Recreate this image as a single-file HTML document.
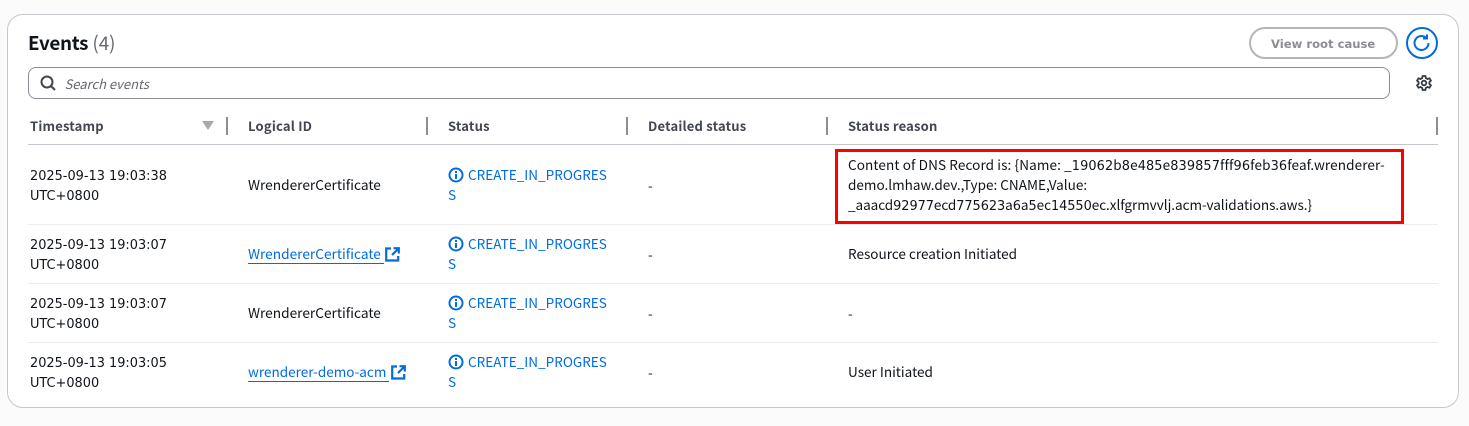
<!DOCTYPE html>
<html><head><meta charset="utf-8"><style>
html,body{margin:0;padding:0;background:#fbfbfb;}
#r{position:relative;width:1469px;height:426px;overflow:hidden;background:#fbfbfb;font-family:"Noto Sans CJK JP","Liberation Sans",sans-serif;font-size:13.55px;color:#0f141a;}
#r div,#r svg{position:absolute;}
.card{left:7px;top:14px;width:1450px;height:392px;background:#fff;border:1px solid #c6c6cd;border-radius:16px;}
.t{white-space:nowrap;line-height:20px;}
.ts{font-family:"DejaVu Sans",sans-serif;font-size:12.9px;}
.h{font-weight:700;color:#424650;top:116px;font-size:13px;letter-spacing:.2px;}
.hl{height:1px;left:28px;width:1410px;background:#ebebf0;}
.d{width:2px;height:18px;top:117px;background:#8c8c94;}
.st{color:#006ce0;}
.w{font-size:13.7px;}
.lk{color:#006ce0;border-bottom:1px solid #006ce0;line-height:19px;padding-right:3px;}
i.n{font-style:normal;font-family:"DejaVu Sans",sans-serif;font-size:12.9px;line-height:0;}
</style></head><body><div id="r">
<div class="card"></div>
<div class="t" style="left:28px;top:29px;font-size:18.8px;line-height:28px;font-weight:700"><span style="letter-spacing:-.3px">Events</span> <span style="font-weight:400;color:#656871">(4)</span></div>
<div style="left:1249px;top:27px;width:145px;height:28px;border:2px solid #b4b4bb;border-radius:16px"></div>
<div class="t ts" style="left:1271px;top:34px;font-weight:700;color:#8c8c94;font-size:11.6px">View root cause</div>
<div style="left:1406px;top:27px;width:28px;height:28px;border:2px solid #006ce0;border-radius:50%"></div>
<svg style="left:1412px;top:33px" width="20" height="20" viewBox="0 0 20 20" fill="none" stroke="#006ce0" stroke-width="2"><path d="M16.5 10a7 7 0 1 1-2.4-5.3"/><path d="M15 1.5v4h-4"/></svg>
<div style="left:28px;top:67px;width:1360px;height:30px;border:1px solid #8c8c94;border-radius:8px;background:#fff"></div>
<svg style="left:40px;top:75px" width="16" height="16" viewBox="0 0 16 16" fill="none" stroke="#424650" stroke-width="2"><circle cx="7" cy="7" r="5.5"/><path d="M11 11l4 4"/></svg>
<div class="t" style="left:64.5px;top:74px;font-style:italic;color:#656871;font-size:13px">Search events</div>
<svg style="left:1416px;top:75px" width="16" height="16" viewBox="0 0 16 16" fill="none" stroke="#353a44" stroke-width="1.8"><circle cx="8" cy="8" r="2.3"/><path d="M6.6 1h2.8l.4 2 1.7 1 2-.7 1.4 2.4-1.5 1.4v1.8l1.5 1.4-1.4 2.4-2-.7-1.7 1-.4 2H6.6l-.4-2-1.7-1-2 .7-1.4-2.4 1.5-1.4V7.1L1.1 5.7l1.4-2.4 2 .7 1.7-1z"/></svg>
<div class="t h" style="left:30px">Timestamp</div>
<svg style="left:202px;top:121px" width="12" height="10"><path d="M0 0h12L6 9z" fill="#a8a8b0"/></svg>
<div class="d" style="left:226px"></div>
<div class="t h" style="left:248px">Logical ID</div>
<div class="d" style="left:426px"></div>
<div class="t h" style="left:448px">Status</div>
<div class="d" style="left:626px"></div>
<div class="t h" style="left:648px">Detailed status</div>
<div class="d" style="left:826px"></div>
<div class="t h" style="left:848px">Status reason</div>
<div class="d" style="left:1436px"></div>
<div class="hl" style="top:144px;background:#c6c6cd"></div>
<div class="hl" style="top:224px"></div>
<div class="hl" style="top:283px"></div>
<div class="hl" style="top:342px"></div>

<div class="t ts" style="left:30px;top:167px">2025-09-13 19:03:38<br>UTC+0800</div>
<div class="t w" style="left:248px;top:174px">WrendererCertificate</div>
<svg style="left:448px;top:167px" width="16" height="16" viewBox="0 0 16 16" fill="none" stroke="#006ce0" stroke-width="2"><circle cx="8" cy="8" r="6.5"/><path d="M8 7v5M8 4v2"/></svg>
<div class="t st" style="left:468px;top:164px">CREATE_IN_PROGRES</div><div class="t st" style="left:448px;top:184px">S</div>
<div class="t" style="left:648px;top:175px">-</div>
<div class="t" style="left:848px;top:154px"><span style="letter-spacing:.1px">Content of DNS Record is: {Name: _<i class="n">19062</i>b<i class="n">8</i>e<i class="n">485</i>e<i class="n">839857</i>fff<i class="n">96</i>feb<i class="n">36</i>feaf.wrenderer-</span><br>demo.lmhaw.dev.,Type: CNAME,Value:<br><span style="letter-spacing:-.05px">_aaacd<i class="n">92977</i>ecd<i class="n">775623</i>a<i class="n">6</i>a<i class="n">5</i>ec<i class="n">14550</i>ec.xlfgrmvvlj.acm-validations.aws.}</span></div>
<div style="left:835px;top:149px;width:563px;height:69px;border:3px solid #f00"></div>

<div class="t ts" style="left:30px;top:236px">2025-09-13 19:03:07<br>UTC+0800</div>
<div class="t lk w" style="left:248px;top:244px">WrendererCertificate</div>
<svg style="left:385px;top:247px" width="15" height="15" viewBox="0 0 15 15" fill="none" stroke="#006ce0" stroke-width="2.2"><path d="M6 1.5H1.2v12h12V9"/><path d="M8.5 1.2h5.3v5.3M13.5 1.5L7 8" /></svg>
<svg style="left:448px;top:236px" width="16" height="16" viewBox="0 0 16 16" fill="none" stroke="#006ce0" stroke-width="2"><circle cx="8" cy="8" r="6.5"/><path d="M8 7v5M8 4v2"/></svg>
<div class="t st" style="left:468px;top:233px">CREATE_IN_PROGRES</div><div class="t st" style="left:448px;top:253px">S</div>
<div class="t" style="left:648px;top:244px">-</div>
<div class="t" style="left:848px;top:243px">Resource creation Initiated</div>

<div class="t ts" style="left:30px;top:295px">2025-09-13 19:03:07<br>UTC+0800</div>
<div class="t w" style="left:248px;top:302px">WrendererCertificate</div>
<svg style="left:448px;top:295px" width="16" height="16" viewBox="0 0 16 16" fill="none" stroke="#006ce0" stroke-width="2"><circle cx="8" cy="8" r="6.5"/><path d="M8 7v5M8 4v2"/></svg>
<div class="t st" style="left:468px;top:292px">CREATE_IN_PROGRES</div><div class="t st" style="left:448px;top:312px">S</div>
<div class="t" style="left:648px;top:303px">-</div>
<div class="t" style="left:848px;top:303px">-</div>

<div class="t ts" style="left:30px;top:354px">2025-09-13 19:03:05<br>UTC+0800</div>
<div class="t lk" style="left:248px;top:362px">wrenderer-demo-acm</div>
<svg style="left:391px;top:365px" width="15" height="15" viewBox="0 0 15 15" fill="none" stroke="#006ce0" stroke-width="2.2"><path d="M6 1.5H1.2v12h12V9"/><path d="M8.5 1.2h5.3v5.3M13.5 1.5L7 8"/></svg>
<svg style="left:448px;top:354px" width="16" height="16" viewBox="0 0 16 16" fill="none" stroke="#006ce0" stroke-width="2"><circle cx="8" cy="8" r="6.5"/><path d="M8 7v5M8 4v2"/></svg>
<div class="t st" style="left:468px;top:351px">CREATE_IN_PROGRES</div><div class="t st" style="left:448px;top:371px">S</div>
<div class="t" style="left:648px;top:362px">-</div>
<div class="t" style="left:848px;top:361px">User Initiated</div>
</div></body></html>
